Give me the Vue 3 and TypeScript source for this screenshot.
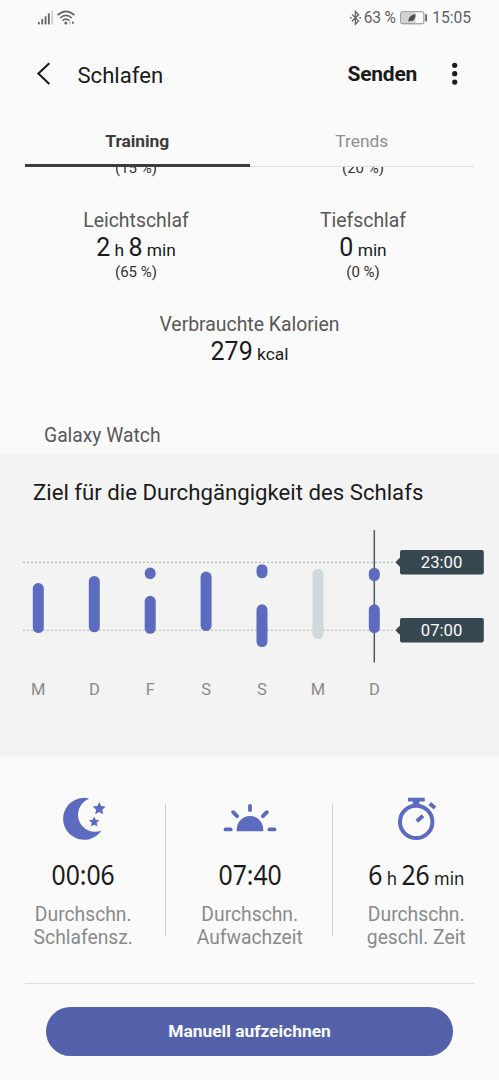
<script setup lang="ts">
interface Segment {
  from: number
  to: number
}

interface Day {
  label: string
  x: number
  muted?: boolean
  segments: Segment[]
}

interface Goal {
  time: string
  y: number
}

const goals: Goal[] = [
  { time: '23:00', y: 42.3 },
  { time: '07:00', y: 110.3 },
]

const days: Day[] = [
  { label: 'M', x: 38.3, segments: [{ from: 63, to: 113 }] },
  { label: 'D', x: 94.3, segments: [{ from: 56, to: 112.3 }] },
  { label: 'F', x: 150.2, segments: [{ from: 47.6, to: 59 }, { from: 75.8, to: 113.8 }] },
  { label: 'S', x: 206.1, segments: [{ from: 51.6, to: 111 }] },
  { label: 'S', x: 262, segments: [{ from: 44.2, to: 58.3 }, { from: 84.3, to: 127 }] },
  { label: 'M', x: 318, muted: true, segments: [{ from: 48.7, to: 119 }] },
  { label: 'D', x: 374.3, segments: [{ from: 47.7, to: 61 }, { from: 84.3, to: 113 }] },
]

const barWidth = 11

function star(cx: number, cy: number, r: number): string {
  return Array.from({ length: 10 }, (_, i) => {
    const radius = i % 2 === 0 ? r : r * 0.48
    const angle = -Math.PI / 2 + (i * Math.PI) / 5
    return `${(cx + radius * Math.cos(angle)).toFixed(2)},${(cy + radius * Math.sin(angle)).toFixed(2)}`
  }).join(' ')
}
</script>

<template>
  <div class="screen">
    <div class="status">
      <svg class="signal" width="38" height="16" viewBox="0 0 38 16">
        <g fill="#666">
          <rect x="0" y="12" width="1.7" height="2.4" />
          <rect x="3.3" y="9" width="1.8" height="5.4" />
          <rect x="6.6" y="6.3" width="1.9" height="8.1" />
          <rect x="9.9" y="3.4" width="1.9" height="11" />
          <rect x="13.3" y="0.8" width="1.8" height="13.6" fill="#cfcfcf" />
          <circle cx="27.8" cy="12.9" r="1.5" />
          <path d="M34.2 11v3.6l2.2-1.8z" />
          <path d="M32.6 11v3.6l-2-1.8z" fill="#b5b5b5" />
        </g>
        <g fill="none" stroke="#666" stroke-width="1.6">
          <path d="M19.6 5.1 Q28 -2.4 36.4 5.1" />
          <path d="M22.1 8 Q28 2.8 33.9 8" />
          <path d="M24.6 10.7 Q28 7.6 31.4 10.7" />
        </g>
      </svg>
      <div class="status-right">
        <svg width="13" height="16" viewBox="0 0 13 16">
          <path d="M3 4.4 L9.6 10.9 L6.4 14.2 V1.4 L9.6 4.7 L3 11.2" fill="none" stroke="#606060" stroke-width="1.3" />
          <path d="M.9 7h1.6v1.6H.9z M10.4 7h1.6v1.6h-1.6z" fill="#606060" />
        </svg>
        <span class="percent">63 %</span>
        <svg class="battery" width="28" height="14" viewBox="0 0 28 14">
          <rect x="1.5" y="1.5" width="14" height="11" fill="#d2d2d2" />
          <rect x=".7" y=".8" width="23.2" height="12" rx="1.6" fill="none" stroke="#888" stroke-width="1" />
          <path d="M8.3 10.9 Q8 4.5 15.5 3 Q15.8 11 9.4 10 Z" fill="#4c4c4c" />
          <rect x="25.2" y="3.3" width="1.8" height="7" fill="#606060" />
        </svg>
        <span>15:05</span>
      </div>
    </div>

    <header class="appbar">
      <svg class="back" width="16" height="24" viewBox="0 0 16 24">
        <path d="M13.3 1.2 L2.4 11.6 L13.3 22" fill="none" stroke="#1b1b1b" stroke-width="2.1" />
      </svg>
      <h1>Schlafen</h1>
      <span class="send">Senden</span>
      <svg class="more" width="6" height="24" viewBox="0 0 6 24" fill="#1b1b1b">
        <circle cx="2.7" cy="3.3" r="2.6" />
        <circle cx="2.7" cy="11.7" r="2.6" />
        <circle cx="2.7" cy="20.1" r="2.6" />
      </svg>
    </header>

    <nav class="tabs">
      <div class="tab active">Training</div>
      <div class="tab">Trends</div>
    </nav>

    <section class="details">
      <div class="pair clipped">
        <div class="share">(15 %)</div>
        <div class="share">(20 %)</div>
      </div>
      <div class="pair phases">
        <div>
          <div class="name">Leichtschlaf</div>
          <div class="value"><b>2</b> h <b>8</b> min</div>
          <div class="share">(65 %)</div>
        </div>
        <div>
          <div class="name">Tiefschlaf</div>
          <div class="value"><b>0</b> min</div>
          <div class="share">(0 %)</div>
        </div>
      </div>
      <div class="calories">
        <div class="name">Verbrauchte Kalorien</div>
        <div class="value"><b>279</b> kcal</div>
      </div>
      <div class="source">Galaxy Watch</div>
    </section>

    <section class="consistency">
      <h2>Ziel für die Durchgängigkeit des Schlafs</h2>
      <svg class="chart" width="499" height="185" viewBox="0 0 499 185">
        <line
          v-for="goal in goals" :key="goal.time"
          x1="23.3" x2="395" :y1="goal.y" :y2="goal.y"
          stroke="#a2a2a2" stroke-width="1.3" stroke-dasharray="1.3 2.7"
        />
        <line x1="374.3" x2="374.3" y1="10" y2="142.5" stroke="#4c5c64" stroke-width="1.5" />
        <g v-for="(day, i) in days" :key="i">
          <rect
            v-for="seg in day.segments" :key="seg.from"
            :x="day.x - barWidth / 2" :y="seg.from"
            :width="barWidth" :height="seg.to - seg.from" :rx="barWidth / 2"
            :fill="day.muted ? '#cfd8dc' : '#5c6bc0'"
          />
          <text class="day" :x="day.x" y="174.8">{{ day.label }}</text>
        </g>
        <g v-for="goal in goals" :key="goal.y">
          <path :d="`M395.3 ${goal.y} l6 -6 v12z`" fill="#37474f" />
          <rect x="400" :y="goal.y - 12.3" width="83.8" height="24.6" rx="2" fill="#37474f" />
          <text class="goal" x="441.6" :y="goal.y + 5.9">{{ goal.time }}</text>
        </g>
      </svg>
    </section>

    <section class="averages">
      <div class="average">
        <svg width="60" height="48" viewBox="52.8 795 60 48" fill="#5c6bc0">
          <path d="M88.4 798.3 A21 21 0 1 0 101.3 830.6 A17 17 0 0 1 88.4 799 Z" />
          <polygon :points="star(99, 808.7, 6.8)" />
          <polygon :points="star(94, 822, 5.5)" />
        </svg>
        <div class="clock"><span>00:06</span></div>
        <div class="caption">Durchschn.<br>Schlafensz.</div>
      </div>
      <div class="average">
        <svg width="60" height="48" viewBox="219.5 795 60 48" fill="#5c6bc0">
          <path d="M236.2 831.3 V829.7 A13.3 13.8 0 0 1 262.8 829.7 V831.3 Z" />
          <path
            d="M225 829.4 H230.2 M268.8 829.4 H274 M232.7 812.2 L236.6 816.2 M266.3 812.2 L262.4 816.2 M249.5 805.8 V810.2"
            fill="none" stroke="#5c6bc0" stroke-width="3.8" stroke-linecap="round"
          />
        </svg>
        <div class="clock"><span>07:40</span></div>
        <div class="caption">Durchschn.<br>Aufwachzeit</div>
      </div>
      <div class="average">
        <svg width="60" height="48" viewBox="386 795 60 48" fill="#5c6bc0">
          <circle cx="416.2" cy="821.9" r="16.2" fill="none" stroke="#5c6bc0" stroke-width="4" />
          <path d="M408 797.8 H424.7 V801.6 H419.4 V806 H412.8 V801.6 H408 Z" />
          <path d="M429.7 803.4 L435 808.1 M416.8 821.3 L423 815.8" stroke="#5c6bc0" stroke-width="4" />
        </svg>
        <div class="clock"><span><b>6</b> h <b>26</b> min</span></div>
        <div class="caption">Durchschn.<br>geschl. Zeit</div>
      </div>
    </section>

    <footer>
      <button type="button">Manuell aufzeichnen</button>
    </footer>
  </div>
</template>

<style>
body {
  margin: 0;
  background: #fafafa;
}
</style>

<style scoped>
.screen {
  width: 499px;
  height: 1080px;
  overflow: hidden;
  background: #fafafa;
  color: #1b1b1b;
  font-family: Roboto, sans-serif;
}

svg {
  display: block;
  flex: none;
}

b {
  font-weight: 400;
}

.status {
  height: 36px;
  padding: 0 28px 0 38px;
  display: flex;
  align-items: center;
  justify-content: space-between;
  box-sizing: border-box;
  color: #606060;
  font-size: 15.6px;
}

.status-right {
  display: flex;
  align-items: center;
}

.percent {
  margin: 0 4.5px 0 1.5px;
  letter-spacing: -0.2px;
}

.battery {
  margin-right: 4px;
}

.appbar {
  height: 77px;
  padding: 0 41px 0 36px;
  display: flex;
  align-items: center;
  box-sizing: border-box;
}

.back {
  margin-top: -1px;
}

h1 {
  margin: 0 auto 0 25.5px;
  font-size: 22.1px;
  font-weight: 400;
}

.send {
  margin-top: -1px;
  font-size: 21px;
  font-weight: 700;
  letter-spacing: -0.25px;
}

.more {
  margin: -2px 0 0 35px;
}

.tabs {
  height: 54px;
  margin: 0 25px;
  display: flex;
}

.tab {
  flex: 1;
  box-sizing: border-box;
  height: 54px;
  padding-top: 1px;
  border-bottom: 1.5px solid #dedede;
  line-height: 55px;
  text-align: center;
  font-size: 17.4px;
  color: #8e8e8e;
}

.tab.active {
  border-bottom: 3px solid #3c3c3c;
  color: #3c3c3c;
  font-weight: 700;
  letter-spacing: -0.05px;
}

.details {
  height: 287px;
}

.pair {
  display: grid;
  grid-template-columns: 227px 227px;
  justify-content: center;
  text-align: center;
}

.clipped {
  height: 42px;
  overflow: hidden;
}

.clipped .share {
  margin-top: -9px;
}

.name {
  height: 22px;
  line-height: 24px;
  font-size: 19.4px;
  color: #585858;
}

.value {
  height: 31px;
  line-height: 34px;
  font-size: 17.4px;
}

.value b {
  font-size: 25px;
}

.share {
  height: 20px;
  line-height: 20px;
  font-size: 15px;
  color: #333;
}

.phases {
  height: 104px;
}

.calories {
  height: 98px;
  text-align: center;
}

.source {
  padding: 0 44px;
  height: 43px;
  line-height: 49px;
  font-size: 19.3px;
  color: #585858;
}

.consistency {
  height: 303px;
  background: #f3f3f3;
}

h2 {
  margin: 0;
  padding: 5px 33px 0;
  height: 61px;
  line-height: 67px;
  font-size: 22.2px;
  font-weight: 400;
  white-space: nowrap;
}

.day {
  font-size: 16.5px;
  fill: #8a8a8a;
  text-anchor: middle;
}

.goal {
  font-size: 16.7px;
  fill: #fafafa;
  text-anchor: middle;
}

.averages {
  height: 226px;
  display: grid;
  grid-template-columns: repeat(3, 166.5px);
}

.average {
  padding-top: 38px;
  display: flex;
  flex-direction: column;
  align-items: center;
  background: linear-gradient(#cfcfcf, #cfcfcf) right 47px / 1.3px 132px no-repeat;
}

.average:last-child {
  background: none;
}

.clock {
  margin-top: 14px;
  height: 36px;
  line-height: 36px;
  font-family: "Noto Sans", sans-serif;
  font-size: 27.5px;
  white-space: nowrap;
}

.clock span {
  display: block;
  transform: scaleX(0.9);
}

.clock:has(b) {
  font-size: 18.5px;
}

.clock b {
  font-size: 27.5px;
}

.caption {
  margin-top: 11px;
  line-height: 22.5px;
  font-size: 19.3px;
  text-align: center;
  color: #8a8a8a;
}

footer {
  margin: 0 25px;
  padding: 23px 21px 0;
  border-top: 1px solid #dedede;
}

button {
  display: block;
  width: 100%;
  height: 49px;
  padding: 0 0 1px;
  border: 0;
  border-radius: 25px;
  background: #5361ab;
  color: #fafafa;
  font: 700 17.4px Roboto, sans-serif;
}
</style>
